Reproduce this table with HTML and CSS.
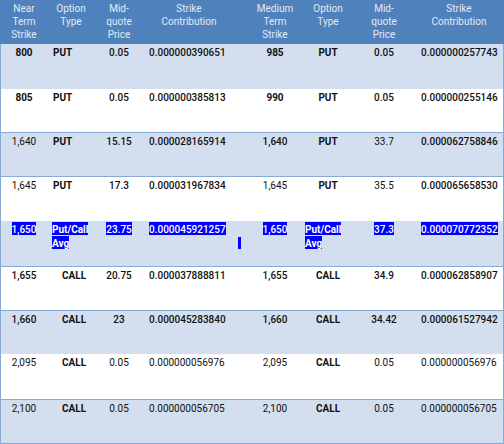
FILE: index.html
```html
<!DOCTYPE html>
<html>
<head>
<meta charset="utf-8">
<link rel="stylesheet" href="styles.css">
</head>
<body>
<div class="sheet">
  <div class="row head">
    <div class="c">Near<br>Term<br>Strike</div>
    <div class="c">Option<br>Type</div>
    <div class="c">Mid-<br>quote<br>Price</div>
    <div class="c">Strike<br>Contribution</div>
    <div class="c"></div>
    <div class="c">Medium<br>Term<br>Strike</div>
    <div class="c">Option<br>Type</div>
    <div class="c">Mid-<br>quote<br>Price</div>
    <div class="c">Strike<br>Contribution</div>
  </div>

  <div class="row blue h45 strong">
    <div class="c b">800</div><div class="l put b">PUT</div><div class="c">0.05</div><div class="l pc">0.000000390651</div><div></div>
    <div class="c b">985</div><div class="c b">PUT</div><div class="c">0.05</div><div class="l pc">0.000000257743</div>
  </div>
  <div class="row white h44 line strong">
    <div class="c b">805</div><div class="l put b">PUT</div><div class="c">0.05</div><div class="l pc">0.000000385813</div><div></div>
    <div class="c b">990</div><div class="c b">PUT</div><div class="c">0.05</div><div class="l pc">0.000000255146</div>
  </div>
  <div class="row blue h44 line strong">
    <div class="c reg">1,640</div><div class="l put b">PUT</div><div class="c">15.15</div><div class="l pc">0.000028165914</div><div></div>
    <div class="c">1,640</div><div class="c b">PUT</div><div class="c reg">33.7</div><div class="l pc">0.000062758846</div>
  </div>
  <div class="row white h44 strong">
    <div class="c reg">1,645</div><div class="l put b">PUT</div><div class="c">17.3</div><div class="l pc">0.000031967834</div><div></div>
    <div class="c reg">1,645</div><div class="c b">PUT</div><div class="c reg">35.5</div><div class="l pc">0.000065658530</div>
  </div>
  <div class="row blue h46 line strong">
    <div class="c"><span class="sel">1,650</span></div>
    <div class="l avg b"><span class="sel">Put/Call<br>Avg</span></div>
    <div class="c"><span class="sel">23.75</span></div>
    <div class="l pc"><span class="sel">0.000045921257</span></div>
    <div class="cur"><span class="caret"></span></div>
    <div class="c"><span class="sel">1,650</span></div>
    <div class="l avg2 b"><span class="sel">Put/Call<br>Avg</span></div>
    <div class="c"><span class="sel">37.3</span></div>
    <div class="l pc"><span class="sel">0.000070772352</span></div>
  </div>
  <div class="row white h44 line strong">
    <div class="c">1,655</div><div class="l call b">CALL</div><div class="c">20.75</div><div class="l pc">0.000037888811</div><div></div>
    <div class="c">1,655</div><div class="c b">CALL</div><div class="c">34.9</div><div class="l pc">0.000062858907</div>
  </div>
  <div class="row blue h43 strong">
    <div class="c">1,660</div><div class="l call b">CALL</div><div class="c">23</div><div class="l pc">0.000045283840</div><div></div>
    <div class="c">1,660</div><div class="c b">CALL</div><div class="c">34.42</div><div class="l pc">0.000061527942</div>
  </div>
  <div class="row white h46 line">
    <div class="c">2,095</div><div class="l call b">CALL</div><div class="c">0.05</div><div class="l pc">0.000000056976</div><div></div>
    <div class="c">2,095</div><div class="c b">CALL</div><div class="c">0.05</div><div class="l pc">0.000000056976</div>
  </div>
  <div class="row blue h44 line">
    <div class="c">2,100</div><div class="l call b">CALL</div><div class="c">0.05</div><div class="l pc">0.000000056705</div><div></div>
    <div class="c">2,100</div><div class="c b">CALL</div><div class="c">0.05</div><div class="l pc">0.000000056705</div>
  </div>
</div>
</body>
</html>
```

FILE: styles.css
```css
html, body {
  margin: 0;
  padding: 0;
  background: #ffffff;
}
.sheet {
  width: 504px;
  font-family: Roboto, "Liberation Sans", sans-serif;
  font-size: 10px;
  color: #111111;
}
.row {
  display: grid;
  grid-template-columns: 46px 48px 48px 92px 12px 56px 50px 62px 88px;
  border-left: 1px solid #86a8d3;
  border-right: 1px solid #86a8d3;
  box-sizing: border-box;
  line-height: 14px;
}
.row > div {
  padding-top: 2px;
  white-space: nowrap;
}
.head {
  height: 44px;
  background: #4f81bd;
  border-color: #4f81bd;
  color: #e3eaf3;
  line-height: 13px;
}
.head > div { padding-top: 2px; }
.blue { background: #d3dfee; }
.white { background: #ffffff; }
.line { border-bottom: 1px solid #8aaad4; }
.h43 { height: 43px; }
.h44 { height: 44px; }
.h45 { height: 45px; }
.h46 { height: 46px; }
.c { text-align: center; }
.l { text-align: left; }
.pc { padding-left: 6px; }
.put { padding-left: 6px; }
.call { padding-left: 15px; }
.avg { padding-left: 5px; }
.avg2 { padding-left: 2px; }
.b { font-weight: 700; }
.strong > div { font-weight: 500; }
.strong > .b { font-weight: 700; }
.strong > .reg { font-weight: 400; }
.sel {
  background: #0000ff;
  color: #ffffff;
  padding-top: 2px;
}
.cur {
  padding-left: 3px;
}
.row > .cur { padding-top: 16px; }
.caret {
  display: block;
  width: 3px;
  height: 12px;
  background: #0000ff;
}
```
